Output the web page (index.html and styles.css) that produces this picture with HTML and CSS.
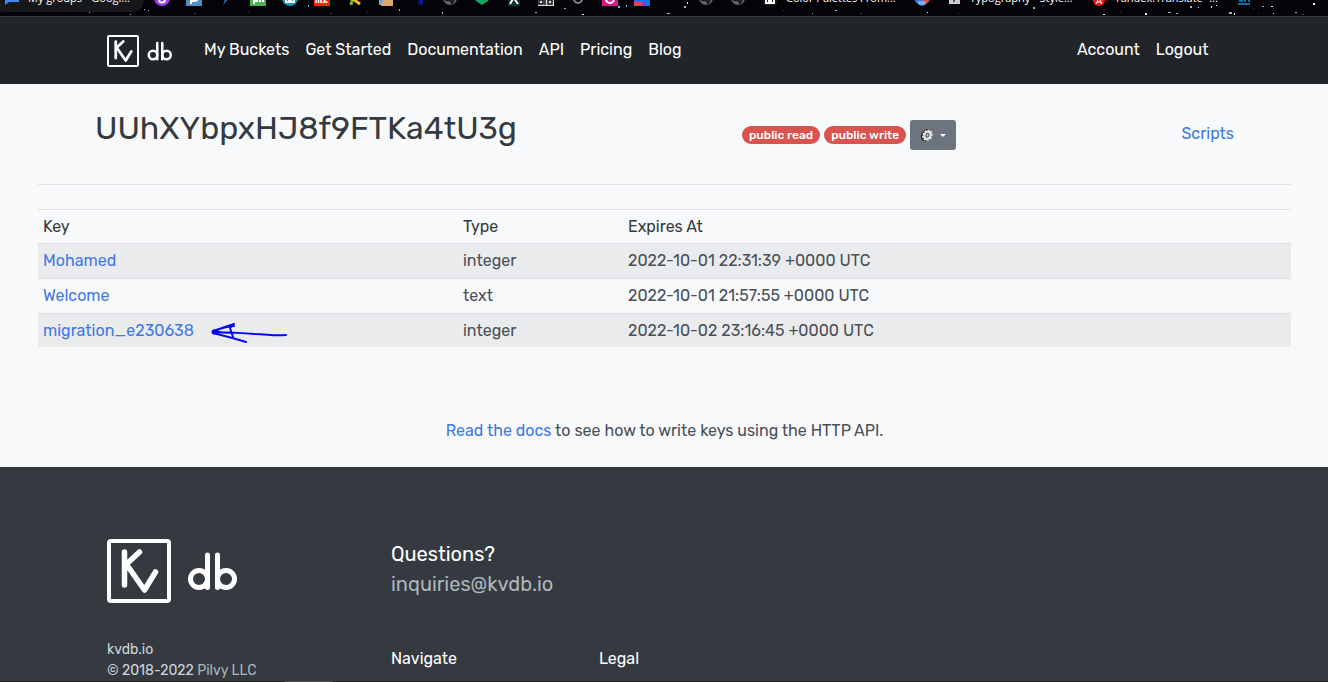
FILE: index.html
```html
<!DOCTYPE html>
<html lang="en">
<head>
<meta charset="utf-8">
<title>kvdb.io bucket</title>
<meta name="viewport" content="width=device-width, initial-scale=1">
<link rel="stylesheet" href="styles.css">
</head>
<body>
<nav class="bookmarks" aria-label="Bookmarks">
  <svg class="stars" width="1328" height="16" viewBox="0 0 1328 16" aria-hidden="true"><g fill="#8fb4e0"><path d="M89 11h1v2h-1zM130 14h1v1h-1zM144 9h1v1h-1zM148 10h1v1h-1zM308 5h1v2h-1zM399 9h1v2h-1zM442 12h1v2h-1zM535 12h2v1h-2zM564 8h2v1h-2zM618 6h2v2h-2zM626 5h1v2h-1zM667 13h3v1h-3zM684 6h2v2h-2zM812 13h1v1h-1zM835 10h2v1h-2zM1033 7h2v2h-2zM1168 12h3v1h-3zM1176 13h2v1h-2zM1190 6h2v2h-2zM1229 12h3v2h-3zM1262 6h2v1h-2zM1295 12h2v1h-2z"/></g><g fill="#eef"><path d="M582 14h2v1h-2zM687 2h1v2h-1zM927 12h1v1h-1zM1103 14h2v1h-2zM1145 13h2v2h-2zM1198 7h1v1h-1zM1211 6h1v2h-1zM1216 5h1v1h-1zM1234 13h1v2h-1zM1271 6h2v1h-2zM1273 13h1v1h-1zM1313 3h2v2h-2z"/></g><g fill="#38405f"><path d="M82 5h1v2h-1zM194 13h2v1h-2zM248 12h1v1h-1zM330 13h2v1h-2zM367 12h1v1h-1zM783 10h1v1h-1zM860 13h2v1h-2zM958 13h1v1h-1zM1042 5h2v1h-2zM1120 11h1v1h-1zM1253 8h1v1h-1zM1258 13h1v1h-1zM1302 14h2v1h-2z"/></g></svg>
  <a class="mark mark-active" href="#"><svg class="ico" viewBox="0 0 16 16" aria-hidden="true"><path d="M1 2h14v10H5l-4 3z" fill="#4285f4"/></svg>My groups - Googl...</a>
  <a class="mark" href="#" aria-label="Udemy"><svg class="ico" viewBox="0 0 16 16"><circle cx="8" cy="8" r="8" fill="#a435f0"/><path d="M5 5v4.500q0 3 3 3t3-3V5" fill="none" stroke="#fff" stroke-width="2"/></svg></a>
  <a class="mark" href="#" aria-label="Pages"><svg class="ico" viewBox="0 0 16 16"><path d="M0 0h16v16H0z" fill="#4d8fc0"/><path d="M5 14V4h3q4 0 4 3.500t-4 3.500H5" fill="none" stroke="#fff" stroke-width="2"/></svg></a>
  <a class="mark" href="#" aria-label="Bolt"><svg class="ico" viewBox="0 0 16 16"><path d="M10 2 5 15l4-5h2l2-7z" fill="#1d9be0"/></svg></a>
  <a class="mark" href="#" aria-label="PH"><svg class="ico" viewBox="0 0 16 16"><path d="M0 0h16v16H0z" fill="#4caf50"/><path d="M4 14V6h3v5H4m6-7v8m0-4h3v4" fill="none" stroke="#fff" stroke-width="2"/></svg></a>
  <a class="mark" href="#" aria-label="Mega"><svg class="ico" viewBox="0 0 16 16"><circle cx="8" cy="8" r="8" fill="#1697b8"/><path d="M4 7v5h3V7m2 0v5h3V7" fill="none" stroke="#fff" stroke-width="2"/></svg></a>
  <a class="mark" href="#" aria-label="MZ"><svg class="ico" viewBox="0 0 16 16"><path d="M0 0h16v16H0z" fill="#f5230a"/><path d="M2 13V8h5v5M4.500 8v5m5-5h3l-3 4h4" fill="none" stroke="#fff" stroke-width="1.500"/></svg></a>
  <a class="mark" href="#" aria-label="Runner"><svg class="ico" viewBox="0 0 16 16"><path d="m8 3-3 12" stroke="#7bb928" stroke-width="3"/><path d="m7 9 7 5" stroke="#f5b72c" stroke-width="3"/></svg></a>
  <a class="mark" href="#" aria-label="Files"><svg class="ico" viewBox="0 0 16 16"><path d="M1 3h8v12H1z" fill="#6aa6df"/><path d="M5 10h10v6H3z" fill="#dda66b"/></svg></a>
  <a class="mark" href="#" aria-label="Night"><svg class="ico" viewBox="0 0 16 16"><path d="M7 12q4 0 3-9 5 7 2 13z" fill="#0b1599"/></svg></a>
  <a class="mark" href="#" aria-label="Globe"><svg class="ico" viewBox="0 0 16 16"><circle cx="8" cy="8" r="7" fill="#60646a"/><path d="M3 10h5l2 3 2-4" fill="none" stroke="#141519" stroke-width="2"/></svg></a>
  <a class="mark" href="#" aria-label="Gem"><svg class="ico" viewBox="0 0 16 16"><path d="M2 8h12v3l-6 4-6-4z" fill="#16a765"/></svg></a>
  <a class="mark" href="#" aria-label="X"><svg class="ico" viewBox="0 0 16 16"><path d="M2 0h12v16H2z" fill="#0c3034"/><path d="m4 14 7-12M5 4l7 10" stroke="#fff" stroke-width="2"/></svg></a>
  <a class="mark" href="#" aria-label="QR"><svg class="ico" viewBox="0 0 16 16"><path d="M0 0h16v16H0z" fill="#ddd"/><path d="M1 10h4v4H1zm6-2v7m3-5h4v4h-4z" fill="none" stroke="#111" stroke-width="1.500"/></svg></a>
  <a class="mark" href="#" aria-label="Ring"><svg class="ico" viewBox="0 0 16 16"><circle cx="8" cy="9" r="4" fill="none" stroke="#858589" stroke-width="2"/></svg></a>
  <a class="mark" href="#" aria-label="Photos"><svg class="ico" viewBox="0 0 16 16"><path d="M0 0h16v16H0z" fill="#d6178d"/><circle cx="8" cy="9" r="4" fill="none" stroke="#fff" stroke-width="2"/></svg></a>
  <a class="mark" href="#" aria-label="Blocks"><svg class="ico" viewBox="0 0 16 16"><path d="M0 0h16v16H0z" fill="#1575e8"/><path d="M0 12h8v4H0z" fill="#f33d54"/><path d="M8 12h4v4H8z" fill="#8d36c8"/></svg></a>
  <a class="mark" href="#" aria-label="Space"><svg class="ico" viewBox="0 0 16 16"></svg></a>
  <a class="mark" href="#" aria-label="Globe two"><svg class="ico" viewBox="0 0 16 16"><circle cx="8" cy="8" r="7" fill="#60646a"/><path d="M3 10h5l2 3 2-4" fill="none" stroke="#141519" stroke-width="2"/></svg></a>
  <a class="mark" href="#" aria-label="Globe three"><svg class="ico" viewBox="0 0 16 16"><circle cx="8" cy="8" r="7" fill="#60646a"/><path d="M3 10h5l2 3 2-4" fill="none" stroke="#141519" stroke-width="2"/></svg></a>
  <a class="mark mark-text" href="#"><svg class="ico" viewBox="0 0 16 16" aria-hidden="true"><path d="M1 1h14v14H1z" fill="#181818"/><path d="M4 9v4h3V9m2 0v4h3V9" fill="none" stroke="#fff" stroke-width="2"/></svg>Color Palettes From...</a>
  <a class="mark" href="#" aria-label="Browser"><svg class="ico" viewBox="0 0 16 16"><circle cx="8" cy="7" r="8" fill="#3478dd"/><path d="m8 11 5-8q5 7-1 11z" fill="#ef4a23"/><path d="M4 11h7l1 3q-4 3-8 0z" fill="#78aef5"/></svg></a>
  <a class="mark mark-text" href="#"><svg class="ico" viewBox="0 0 16 16" aria-hidden="true"><path d="M3 1h11v13H3z" fill="#ccc"/><path d="M8 6v6M6 8h5" stroke="#555" stroke-width="2"/></svg>Typography - Style...</a>
  <a class="mark mark-text" href="#"><svg class="ico" viewBox="0 0 16 16" aria-hidden="true"><circle cx="8" cy="10" r="6" fill="#f51416"/><path d="m5 14 3-6 3 6m-5-2h4" fill="none" stroke="#fff"/></svg>Yandex.Translate -...</a>
  <a class="mark" href="#" aria-label="Buildings"><svg class="ico" viewBox="0 0 16 16"><path d="M4 12V7h2v5m3 0V5h4v7M2 14h12" fill="none" stroke="#126fa8" stroke-width="2"/></svg></a>
</nav>

<header class="navbar">
  <a class="brand" href="#" aria-label="Kvdb home"><svg class="logo" viewBox="0 0 132 64" aria-hidden="true"><g fill="none" stroke="#fff" stroke-linecap="round" stroke-linejoin="round"><rect x="2" y="2" width="60" height="60" rx="2" stroke-width="4"/><path d="M17.500 13v33M32.500 13 18.500 26M18.500 24 37.500 51 48.500 33" stroke-width="5.500"/><circle cx="92" cy="40" r="8.500" stroke-width="5"/><circle cx="119" cy="40" r="8.500" stroke-width="5"/><path d="M100.500 16v32.500M110.500 16v32.500" stroke-width="5"/></g></svg></a>
  <nav class="links" aria-label="Main"><a href="#">My Buckets</a><a href="#">Get Started</a><a href="#">Documentation</a><a href="#">API</a><a href="#">Pricing</a><a href="#">Blog</a></nav>
  <nav class="links account" aria-label="Account"><a href="#">Account</a><a href="#">Logout</a></nav>
</header>

<main class="content">
  <div class="bucket">
    <h1>UUhXYbpxHJ8f9FTKa4tU3g</h1>
    <div class="status"><span class="badge">public read</span><span class="badge">public write</span><button class="settings" type="button" aria-label="Bucket settings"><svg class="gear" viewBox="0 0 14 14" aria-hidden="true"><g transform="rotate(32 7 7)"><ellipse cx="6.500" cy="7.500" rx="5" ry="6.500" fill="#222"/><ellipse cx="7.500" cy="7" rx="4" ry="5" fill="#e4e4e4" stroke="#e4e4e4" stroke-width="2" stroke-dasharray="2 1"/><ellipse cx="7.500" cy="7" rx="1.500" ry="2" fill="#bbb" stroke="#555"/></g></svg><span class="caret"></span></button></div>
    <a class="scripts" href="#">Scripts</a>
  </div>
  <div class="table-wrap">
    <table class="keys">
      <colgroup><col class="col-key"><col class="col-type"><col></colgroup>
      <thead><tr><th scope="col">Key</th><th scope="col">Type</th><th scope="col">Expires At</th></tr></thead>
      <tbody>
        <tr><td><a href="#">Mohamed</a></td><td>integer</td><td>2022-10-01 22:31:39 +0000 UTC</td></tr>
        <tr><td><a href="#">Welcome</a></td><td>text</td><td>2022-10-01 21:57:55 +0000 UTC</td></tr>
        <tr><td><span class="noted"><a href="#">migration_e230638</a><svg class="arrow" viewBox="0 0 78 24" aria-hidden="true"><path d="M76 16c-12 1-20-1-31-1-14-1-28-2-42-2 8-4 14-6 21-8l-4 4 3 9M3 12c9-3 16-5 21-5M3 12c9 2 16 2 20 2M3 14c12 3 20 5 33 9" fill="none" stroke="#0909ee" stroke-width="2" stroke-linecap="round" stroke-linejoin="round"/><circle cx="4" cy="13" r="2.500" fill="#0909ee"/></svg></span></td><td>integer</td><td>2022-10-02 23:16:45 +0000 UTC</td></tr>
      </tbody>
    </table>
  </div>
  <p class="docs"><a href="#">Read the docs</a> to see how to write keys using the HTTP API.</p>
</main>

<footer class="footer">
  <div class="about">
    <svg class="logo-large" viewBox="0 0 132 64" role="img" aria-label="Kvdb"><g fill="none" stroke="#fff" stroke-linecap="round" stroke-linejoin="round"><rect x="2" y="2" width="60" height="60" rx="2" stroke-width="4"/><path d="M17.500 13v33M32.500 13 18.500 26M18.500 24 37.500 51 48.500 33" stroke-width="5.500"/><circle cx="92" cy="40" r="8.500" stroke-width="5"/><circle cx="119" cy="40" r="8.500" stroke-width="5"/><path d="M100.500 16v32.500M110.500 16v32.500" stroke-width="5"/></g></svg>
    <p class="legal"><strong>kvdb.io</strong><br><strong>© 2018-2022</strong> Pilvy LLC</p>
  </div>
  <div class="contact">
    <h2>Questions?</h2>
    <a class="mail" href="#">inquiries@kvdb.io</a>
    <div class="sections"><h3>Navigate</h3><h3>Legal</h3></div>
  </div>
</footer>
<div class="taskbar"><span class="task"></span></div>
</body>
</html>
```
FILE: styles.css
```css
* { box-sizing: border-box; }

body {
  margin: 0;
  min-height: 100vh;
  display: flex;
  flex-direction: column;
  background: #f8f9fb;
  color: #495057;
  font: 16px/24px Rubik, Roboto, sans-serif;
}

a { color: #4178e2; text-decoration: none; }

.bookmarks {
  position: relative;
  display: flex;
  align-items: flex-end;
  gap: 16px;
  height: 17px;
  padding: 0 4px 10px;
  overflow: hidden;
  background: #030308;
  border-bottom: 1px solid #3c3d40;
}
.stars { position: absolute; left: 0; top: 0; }
.mark {
  position: relative;
  z-index: 0;
  display: flex;
  flex: none;
  align-items: center;
  gap: 8px;
  height: 16px;
  color: #fff;
  font: 11px/16px "Open Sans", "Noto Sans", sans-serif;
  white-space: nowrap;
}
.mark-text { padding-right: 2px; }
.mark-active { width: 134px; }
.mark-active::before {
  content: "";
  position: absolute;
  inset: -6px -6px -6px -12px;
  z-index: -1;
  border-radius: 12px;
  background: #17181a;
}
.ico { width: 16px; height: 16px; flex: none; }

.navbar {
  display: flex;
  align-items: center;
  height: 67px;
  padding: 0 9% 0 107px;
  background: #212529;
}
.brand { display: flex; margin-right: 31px; }
.logo { display: block; width: 66px; height: 32px; }
.links { display: flex; gap: 16px; padding-bottom: 2px; }
.links a { color: #fff; font-weight: 450; }
.account { margin-left: auto; }

.content { padding: 24px 37px 0 38px; }
.bucket {
  display: flex;
  align-items: flex-start;
  height: 76px;
  padding: 0 57px;
}
h1 {
  flex: 0 0 647px;
  margin: 0;
  color: #343a40;
  font-size: 32px;
  line-height: 40px;
  font-weight: 400;
}
.status { display: flex; align-items: center; gap: 4px; padding-top: 12px; }
.badge {
  padding: 0 7px;
  border-radius: 9px;
  background: #d9534f;
  color: #fff;
  font-size: 12px;
  line-height: 18px;
  font-weight: 500;
}
.settings {
  display: flex;
  align-items: center;
  justify-content: center;
  gap: 6px;
  width: 46px;
  height: 30px;
  padding: 0;
  border: 0;
  border-radius: 3px;
  background: #6c757d;
}
.gear { width: 14px; height: 14px; }
.caret { border: 3px solid transparent; border-top-color: #fff; border-bottom: 0; }
.scripts { margin-left: auto; padding-top: 14px; }

.table-wrap { border-top: 1px solid #dee2e6; padding-top: 24px; }
.keys { width: 100%; border-collapse: collapse; table-layout: fixed; }
.col-key { width: 420px; }
.col-type { width: 165px; }
.keys th, .keys td {
  padding: 5px;
  border-top: 1px solid #dcdfe3;
  text-align: left;
  font-weight: 400;
}
.keys th { padding-bottom: 4px; color: #343a40; }
.keys tbody tr:last-child td { padding-bottom: 4px; }
.keys tbody tr:nth-child(odd) { background: #eaebed; }
.noted { display: flex; align-items: center; gap: 16px; }
.arrow { width: 78px; height: 24px; }

.docs { margin: 72px 0 24px; text-align: center; }

.footer {
  flex: 1;
  display: flex;
  padding: 72px 8% 0 107px;
  background: #343a40;
  color: #adb5bd;
}
.about { flex: 0 0 284px; }
.logo-large { display: block; width: 132px; height: 64px; }
.legal { margin: 36px 0 0; font-size: 14px; line-height: 21px; }
.legal strong { color: #ced4da; font-weight: 450; }
.contact { flex: 1; }
.contact h2 { margin: 0; color: #fff; font-size: 20px; line-height: 30px; font-weight: 450; }
.mail { display: block; color: #adb5bd; font-size: 20px; line-height: 30px; }
.sections { display: grid; grid-template-columns: 208px 1fr; padding-top: 48px; }
.sections h3 { margin: 0; color: #fff; font-size: 16px; line-height: 24px; font-weight: 450; }

.taskbar { flex: none; height: 2px; padding-left: 285px; background: #1f1d1e; }
.task { display: block; width: 48px; height: 2px; background: #4d4b4c; }
```
